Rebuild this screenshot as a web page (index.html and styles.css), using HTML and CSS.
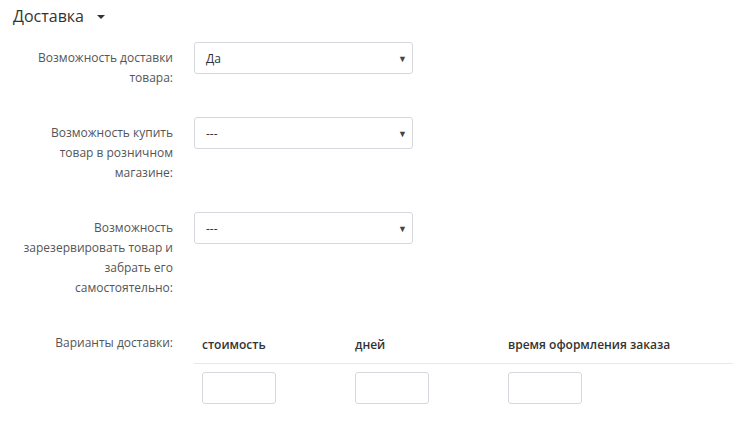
FILE: index.html
```html
<!DOCTYPE html>
<html lang="ru">
<head>
<meta charset="utf-8">
<link rel="stylesheet" href="styles.css">
</head>
<body>
<div class="page">
  <h3 class="section-title">Доставка <span class="caret"></span></h3>
  <div class="form">
    <div class="row">
      <label class="label">Возможность доставки товара:</label>
      <div class="control">
        <div class="select"><span>Да</span><span class="arrow">▼</span></div>
      </div>
    </div>
    <div class="row">
      <label class="label">Возможность купить товар в розничном магазине:</label>
      <div class="control">
        <div class="select"><span>---</span><span class="arrow">▼</span></div>
      </div>
    </div>
    <div class="row">
      <label class="label">Возможность зарезервировать товар и забрать его самостоятельно:</label>
      <div class="control">
        <div class="select"><span>---</span><span class="arrow">▼</span></div>
      </div>
    </div>
    <div class="row">
      <label class="label">Варианты доставки:</label>
      <div class="control wide">
        <table class="options">
          <thead>
            <tr><th>стоимость</th><th>дней</th><th>время оформления заказа</th></tr>
          </thead>
          <tbody>
            <tr>
              <td><input class="box" type="text"></td>
              <td><input class="box" type="text"></td>
              <td><input class="box" type="text"></td>
            </tr>
          </tbody>
        </table>
      </div>
    </div>
  </div>
</div>
</body>
</html>
```
FILE: styles.css
```css
* { box-sizing: border-box; }
html, body { margin: 0; padding: 0; background: #fff; }
body {
  font-family: "Open Sans", "Noto Sans", sans-serif;
  font-size: 12px;
  color: #555;
}
.page { padding: 6px 0 0 13px; }
.section-title {
  margin: 0;
  font-size: 16px;
  font-weight: 400;
  color: #333;
  line-height: 20px;
  display: flex;
  align-items: center;
  gap: 13px;
}
.caret {
  width: 0; height: 0;
  border-left: 4px solid transparent;
  border-right: 4px solid transparent;
  border-top: 4px solid #333;
  margin-top: 1px;
}
.form { margin-top: 16px; }
.row {
  display: flex;
  align-items: flex-start;
  margin-bottom: 29px;
}
.label {
  width: 160px;
  flex: none;
  text-align: right;
  padding: 6px 0 0 8px;
  line-height: 20px;
  color: #555;
}
.control { margin-left: 21px; }
.control.wide { flex: 1; margin-left: 21px; }
.select {
  width: 219px;
  height: 32px;
  border: 1px solid #d4d8dd;
  border-radius: 3px;
  display: flex;
  align-items: center;
  justify-content: space-between;
  padding: 0 5px 0 11px;
  color: #333;
}
.arrow { font-size: 9px; color: #444; }
.options { border-collapse: collapse; width: 100%; }
.options th {
  text-align: left;
  font-weight: 600;
  color: #333;
  padding: 8px 8px;
  line-height: 20px;
  width: 153px;
  border-bottom: 1px solid #e6e8ea;
}
.options th:last-child { width: auto; }
.options td { padding: 8px 8px; }
.box {
  display: block;
  width: 74px;
  height: 32px;
  border: 1px solid #d4d8dd;
  border-radius: 3px;
  margin: 0;
}
```
